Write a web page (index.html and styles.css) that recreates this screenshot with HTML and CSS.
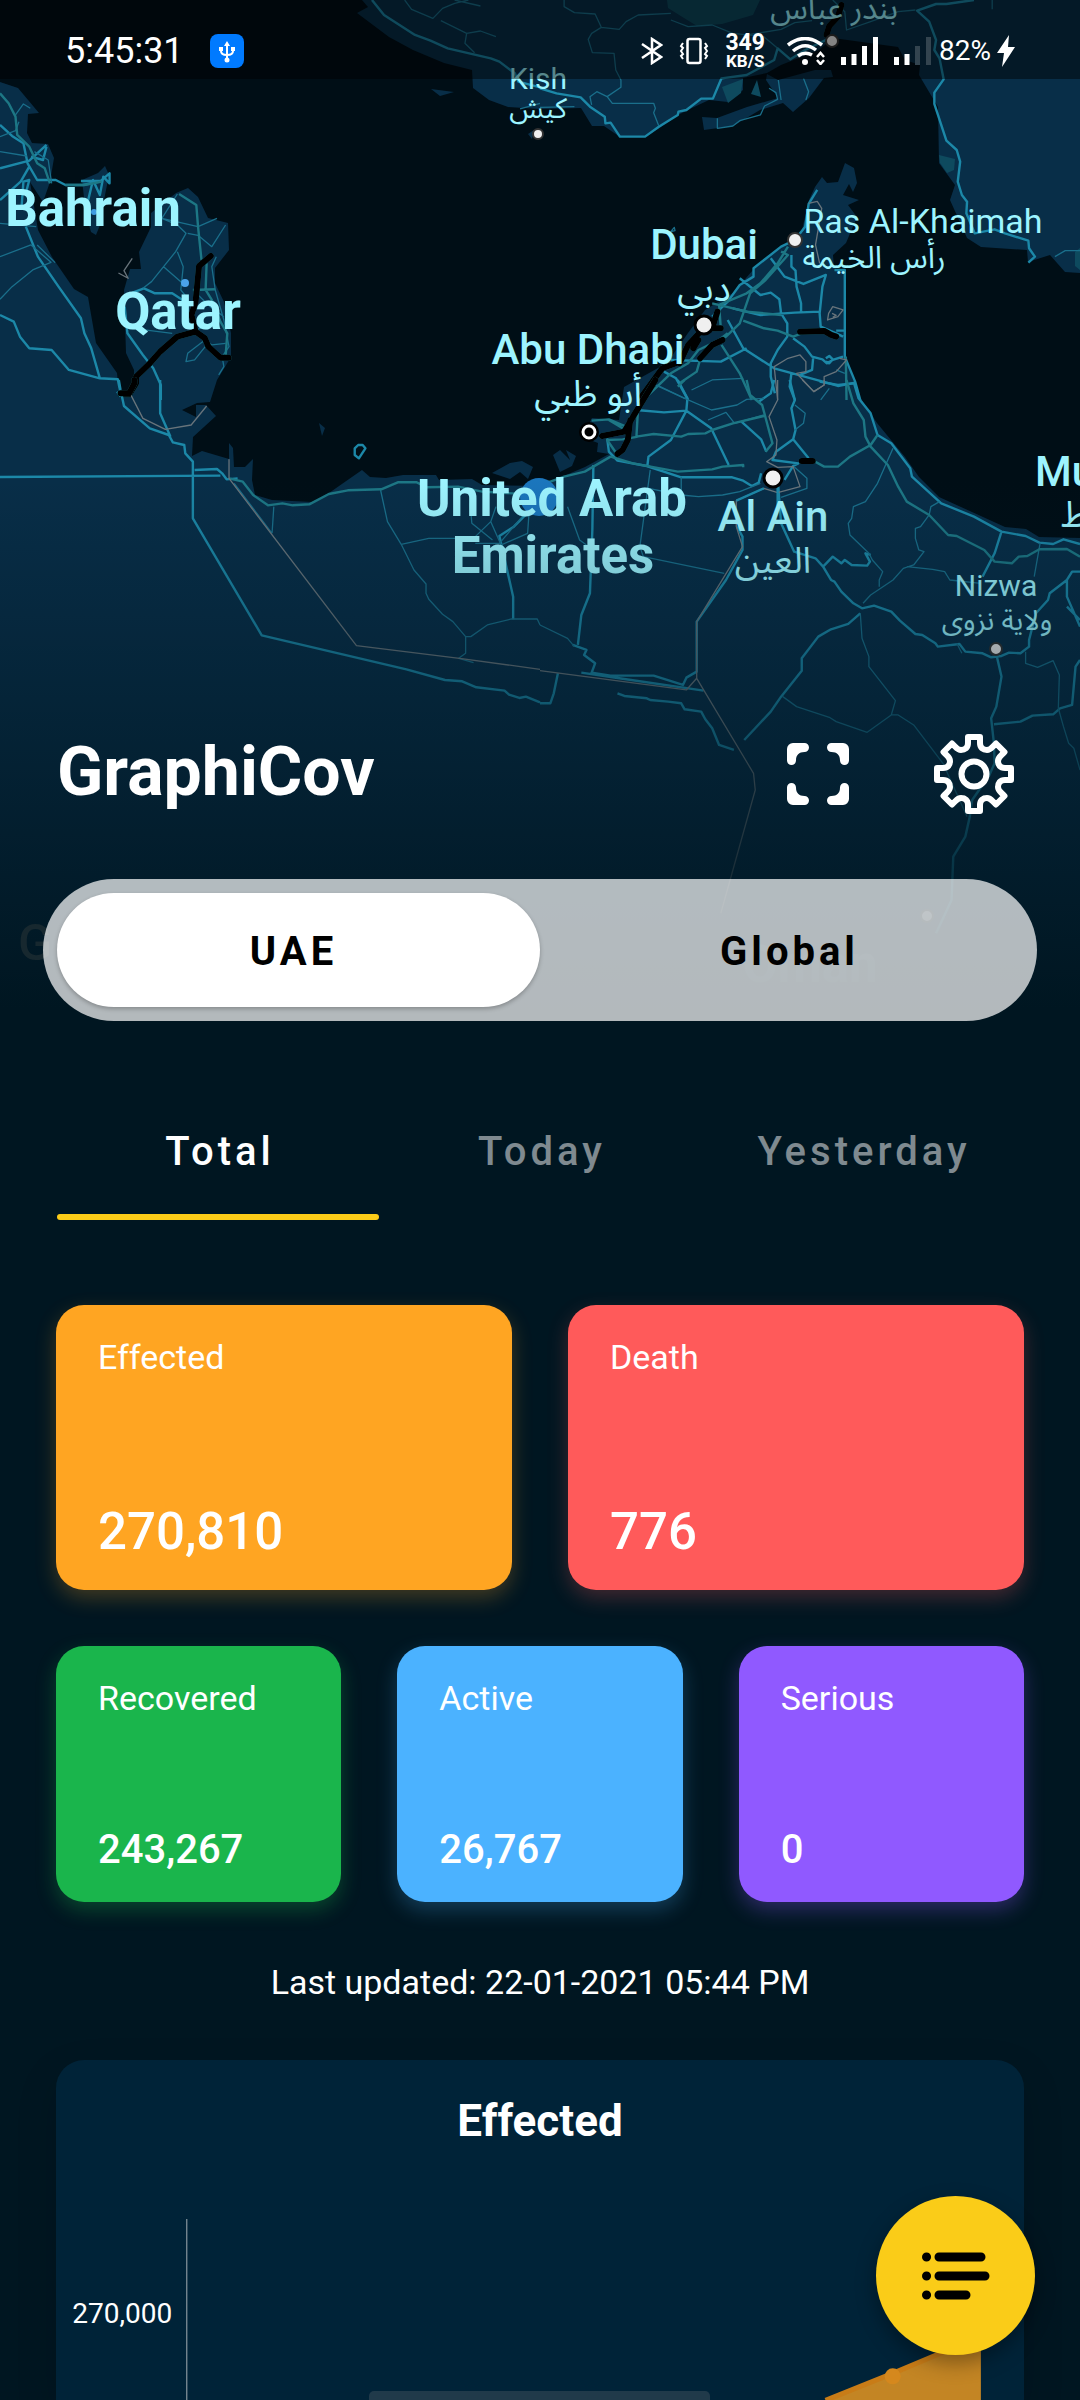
FILE: index.html
```html
<!DOCTYPE html>
<html lang="en">
<head>
<meta charset="utf-8">
<meta name="viewport" content="width=device-width, initial-scale=1">
<title>GraphiCov</title>
<link rel="stylesheet" href="styles.css">
</head>
<body>
<div class="app">
  <svg class="map" viewBox="0 0 1080 1010" preserveAspectRatio="xMidYMin slice" role="img" aria-label="Map of the Gulf region">
    <defs>
      <linearGradient id="fade" x1="0" y1="0" x2="0" y2="1">
        <stop offset="0" stop-color="#001621" stop-opacity="0"/>
        <stop offset="1" stop-color="#001621"/>
      </linearGradient>
    </defs>
    <rect width="1080" height="1010" fill="#000e16"/>

    <!-- land -->
    <g class="land">
      <path d="M0 82 18 88 39 113 28 114 27 133 32 143 48 144 54 158 50 182 43 202 30 182 38 230 52 257 74 289 88 297 96 343 117 373 119 393 134 390 134 370 126 353 124 290 130 269 141 269 139 252 151 227 151 213 176 193 188 188 198 197 208 218 228 223 229 250 215 268 215 283 224 302 231 333 231 357 217 380 210 402 197 403 182 410 196 417 196 405 206 405 216 416 193 437 192 456 202 451 229 459 229 443 233 448 234 467 245 467 253 459 252 480 255 495 272 500 312 502 329 493 362 470 370 477 386 478 403 475 436 475 439 480 472 479 482 485 540 486 585 467 609 454 597 452 598 443 582 437 592 418 619 420 624 387 667 363 688 333 705 310 733 293 753 270 802 230 809 200 815 187 822 177 827 183 838 182 845 163 854 168 857 183 853 192 849 184 843 195 859 200 848 205 857 217 846 243 833 255 834 268 845 272 845 357 860 397 877 423 905 457 919 477 939 497 1005 527 1026 529 1039 537 1080 538V1010H0Z"/>
      <path d="M362 0 368 7 357 13 389 37 413 50 444 63 472 70 473 88 489 100 508 107 540 109 581 108 592 126 604 126 620 137 647 136 661 127 678 115 692 108 709 100 728 102 743 90 743 78 767 73 781 65 819 50 833 38 898 47 905 60 920 65 919 75 938 107 939 163 955 185 950 200 967 238 981 247 1027 250 1028 262 1050 255 1065 272 1080 273V0Z"/>
      <path d="M702 117 717 118 747 107 778 98 766 80 767 74 778 80 815 70 831 70 833 77 824 78 809 98 793 112 783 103 760 110 733 126 704 130Z"/>
      <path d="M82 180 98 173 105 166 109 175 104 200 100 225 96 235 91 232 86 215Z"/>
      <path d="M431 89 454 92 440 96ZM492 473 510 463 522 461 533 467 528 479 520 472 510 479ZM319 423 325 428 322 436ZM553 455 560 450 570 460 566 450 576 456 572 466 560 472ZM528 134 534 130 532 139Z"/>
    </g>
    <g fill="#0e4a5e">
      <path d="M722 87 743 79 741 93 728 103ZM757 80 761 97 751 94ZM939 155 955 159 954 170 947 173 940 163ZM667 0H760L753 15 722 24 697 26 684 18 668 8Z"/>
      <path d="M1075 252 1080 248V270L1075 266Z"/>
    </g>

    <!-- west: Saudi Arabia, Bahrain, Qatar -->
    <g class="roads" transform="scale(.3444 .3333)">
      <path class="major" d="M0 375 35 408 68 430 80 490 108 540H162L190 555H240L290 545 318 520V550L300 530 290 585 270 540 255 605M235 543H300M0 505 85 482 135 435M90 470 125 480 135 440M85 500 60 545 0 600M62 630 68 545 85 540 75 580M75 680 110 770 170 860 235 955 245 1000 265 1045 290 1135 200 1110 150 1050 85 1045 58 1010 40 965 0 945M290 1135 342 1138 350 1180M362 920 370 1000 415 1065 445 1105 467 1155V1200M385 878 418 865 450 880H500L530 900M1080 0 1115 45 1205 105 1250 122 1300 145 1425 175 1450 185 1495 220 1505 245 1568 262"/>
      <path class="minor" d="M0 455 78 468M0 410 45 392 55 365M45 345 68 312 88 325M100 455 140 480 150 550M0 770 90 735 148 787 95 810 35 860 0 898M0 670 105 680M108 735 160 788M515 582 470 655 515 675 540 700 510 755 475 800 440 845 415 865M515 755 532 800 525 870 545 895M475 800 530 850M470 655 575 680 630 655M545 700 575 706 615 740 655 675M628 770 615 800 625 870 650 960 665 1040 645 1070 650 1100 635 1125M575 800 570 880 610 920 650 950M570 990 640 960M575 1000 615 1035 655 1030M595 1020 545 1060 540 1085 565 1080 600 1035M500 1000 420 990M1175 0 1195 28 1257 55 1285 25 1320 10 1360 0M1320 0 1370 12 1395 18M1280 62 1355 100 1350 130 1378 158M1355 100 1395 93 1440 110M1510 327 1568 310"/>
      <path class="motorway" d="M0 280 25 310 45 350 50 405 85 440 108 490 130 505 145 550M190 555H245L295 545M520 582 570 615 575 680 585 780M600 790 597 870 615 900 640 965 660 1000 655 1070M560 870 625 868M575 800 570 880"/>
      <path class="border" d="M384 775 360 812 372 835 344 819"/>
      <g class="closed"><path d="M612 768 578 798 568 905 556 945 568 995 515 1010 465 1055 435 1090 395 1130V1150L375 1183H350M568 995 595 1015 605 1040 640 1073H664"/></g>
    </g>

    <!-- north-east: Iran and the Emirates coast -->
    <g class="roads" transform="translate(540 0) scale(.3444 .3333)">
      <path class="major" d="M0 265 48 280 118 292 145 320 188 350 190 370 205 368 232 410H305L345 380 400 345 402 335 425 330 468 296H502L527 235 600 225 680 180 690 145 727 178 770 150 850 110M1260 0 1180 12 1150 12 1095 32 1130 65 1150 120 1145 150 1160 175 1172 238 1145 278V312L1180 422 1210 450 1220 485 1213 545 1225 585 1240 605 1238 640 1262 700 1320 688 1350 700 1418 722 1420 745 1437 770 1418 788"/>
      <path class="major" d="M805 570 780 612 770 680 740 720 700 740 620 805V830L580 855 545 905 500 950M670 775 710 830 765 852 830 825 820 860 812 940 815 980 860 1000 880 1010M730 765V800L742 812 745 860 758 910V935M580 835 640 885 670 878 695 898 700 940 718 970V1010L690 1050 670 1090V1130L682 1180M560 925 640 945 740 938 812 935M855 810H885V1070L915 1145 930 1200M545 960 590 1045 680 1105 840 1150 865 1158 915 1148M360 1115 395 1135 430 1200M380 1080 525 1085 600 1045M735 1015 768 1040 790 1070 820 1078 833 1090 850 1080 880 1070M860 992H882M730 1120 725 1160 740 1200M793 1075 790 1110 755 1125M830 1075 840 1068 850 1078 840 1090 830 1085"/>
      <path class="minor" d="M70 0V20L100 38 160 42 178 82 150 100 140 118 152 158 215 160 220 210 235 240V262L195 290 165 275 145 290 150 315M178 82 230 88 250 65 285 45 380 40M195 290 210 310H330L335 325 330 338 345 378M380 60 430 80 500 75 560 100 650 110 690 145M600 105 700 88 740 68 790 62M850 0 885 35 890 90 960 65 1040 35 1090 30M1313 0V28M1495 770 1525 752H1568M0 322 100 320M515 355V385L560 378 580 362 640 345 652 318 690 298 685 278 665 265M692 240 700 300M765 235 780 275 772 300M440 1170 500 1140 590 1135M385 688 380 695 392 692 390 682ZM860 1110 885 1120M840 1165 815 1200M340 1155 420 1195"/>
      <path class="motorway" d="M720 740 690 790 640 850 600 880 520 915 525 985M700 755 720 765 655 840 610 880 580 970 540 1010 460 1050 430 1090 380 1120 300 1200M500 910 600 935 700 945M590 962 650 985 690 992 735 1010 760 1000M527 1035 580 1120 615 1200M545 1000 470 1060 455 1115 405 1150M888 1070 890 1200"/>
      <path class="border" d="M780 610 805 604 818 625 800 735 812 790M838 940 850 920 880 930 865 950 835 960ZM848 940 860 946 850 952M690 1200 680 1100 720 1075 755 1065 772 1085V1115L745 1120 795 1175 825 1155V1130L860 1115 890 1080 870 1075"/>
      <g class="closed"><path d="M875 15 865 50 840 78 832 105M515 935 500 985H525M475 985 430 1035 405 1090M460 1020 445 1045M530 1020 500 1035 465 1075M395 1090 355 1105 295 1190M755 995 825 993 845 1005 860 1010"/></g>
    </g>

    <!-- south-west desert -->
    <g class="roads" transform="translate(0 380) scale(.3444 .3333)">
      <path class="major" d="M345 0 350 30 360 78 435 145 490 165 502 187 535 195 538 220 560 245V415L760 766 1180 868 1292 900 1342 904 1383 922 1465 932 1478 944 1508 954 1527 950 1568 967M0 291 640 287M465 0V100L495 170M565 270 630 267 645 280 658 298 690 295M1530 400 1492 440 1450 468 1490 650V718M340 35 350 50"/>
      <path class="minor" d="M680 310 790 460M795 380 790 460M1105 330 1125 425 1165 493 1202 570 1237 612V640L1245 658 1285 703 1315 725 1352 770H1367L1415 735 1485 717H1560L1568 735M1352 770V820L1332 835 1375 848M1165 493 1245 475H1330M1365 370 1370 430 1430 480M1440 380 1425 425 1380 470M1425 425 1455 495 1532 460 1538 370M1568 348 1450 490H1380"/>
      <path class="motorway" d="M665 295 705 305 735 345 778 376 820 370 850 376 898 373 955 342 1010 331 1107 328 1155 307H1210L1240 322 1330 320 1400 335 1568 345"/>
      <path class="border" d="M375 35 415 115 480 148 555 135 600 78M665 238V295L1035 797 1340 836 1568 868"/>
      <path class="major" d="M1030 205 1040 195H1053L1061 205 1042 235 1030 225Z"/>
      <g class="closed"><path d="M390 0V10L375 40H350"/></g>
    </g>

    <!-- south-east: Al Ain and Oman -->
    <g class="roads" transform="translate(540 380) scale(.3444 .3333)">
      <path class="major" d="M280 90 360 97 425 92 428 55 400 0M425 92 497 145 548 255M425 92 380 180 315 230 312 255M195 175 200 215 225 242 310 258 410 292H558L590 302 615 318 635 308 642 280M680 0 670 40 635 65M585 125 642 178 657 215M725 0 740 60 730 85 742 150 735 178 685 215 675 240 750 250 735 258 710 300M735 178 780 235M812 5 865 15 912 10 925 55 960 100 980 165 1020 190 1075 265 1080 290 1165 370 1260 410 1340 455 1410 468 1450 488 1490 492 1520 478 1568 492M692 320 700 430 738 515 800 535 822 560 845 600 855 605 875 635 910 670 935 685 970 677 1020 695 1045 722 1090 762 1110 765 1148 790 1155 800 1218 792 1235 815 1285 820 1310 832 1340 828 1362 818 1395 820 1420 800V780L1440 700 1475 660 1480 640 1530 600V650L1568 740M822 560 850 530 875 550 885 540 905 555 950 557 958 545 945 520 960 525M1340 455 1320 520 1285 590M155 255 152 450 145 640 120 705 110 795M572 440 588 470V510L540 600 455 725V875L425 893 415 915 330 887H205L150 878 160 850 128 825 135 810 95 795M0 970 30 970 40 940 52 880M225 940 245 948 310 955 320 960 372 965 410 970 420 988 468 995 480 1018 500 1045 520 1095 563 1110M930 700 895 732 845 748 808 770 760 835V872L700 950 670 995 593 1080M1327 832 1340 890 1325 980 1310 1015 1318 1090 1320 1150 1305 1185 1255 1260 1248 1310 1235 1370 1200 1430 1195 1560 1150 1660M1318 1033 1395 1025 1430 1007 1490 1003 1510 985 1545 975 1555 860 1568 840M1568 575H1545L1530 600M1530 680 1568 720M120 878 230 895 475 932"/>
      <path class="minor" d="M325 10 420 55 498 90 572 75 600 58 650 55M488 120 540 97 565 130 650 105M320 270 290 500 300 530 535 580M80 380 115 480 135 495M315 325 410 345 460 350 530 345 580 335 640 310M410 290V340M738 260 775 295V325L700 352M740 75 770 100 765 130 740 150M1025 205 980 310 945 365 910 380 905 415 895 430 900 465 955 520 965 540 995 575 985 600V620M1160 365 1135 380 1130 405 1105 440 1090 445V475L1100 510 1115 515 1085 555 1055 565 1025 600 960 645 938 670M1065 560 1140 568 1175 575 1190 600 1280 610M1452 490 1435 590M930 700 935 775 955 830V860L1032 962 1020 1005 950 1057 860 1025 840 1012 745 980 705 950M1020 1005H1040L1085 1035 1170 1150 1240 1310M1410 815V850L1445 862 1490 842 1508 885 1505 985 1520 1040 1535 1090 1550 1105 1568 1170M0 735 80 775 100 800M1210 790 1225 820"/>
      <path class="motorway" d="M285 80 280 170 330 162 410 170 430 162 480 160 500 150 560 130 650 108M600 0 610 45 645 75 675 190 655 215M0 305 30 305 70 290 130 275 205 230 270 250 400 275 500 268 530 260 590 255 590 262M285 170 240 178 195 180 225 225M150 122 200 118 250 140M200 120 240 145M890 0 910 70 940 120 945 170 960 200 1010 255 1040 320 1065 365 1130 405 1185 465 1210 468 1290 510 1320 545 1370 550 1390 530 1415 528 1450 508 1530 507 1568 530M980 165 960 195 900 230 865 260H825L790 240M400 20 420 0"/>
      <path class="border" d="M690 0V60L665 110 688 180 685 225 658 245 690 262 735 260 755 320 690 338 650 325 570 362V440L588 500 455 725V895L425 930 0 872M455 895 620 1180 625 1230 525 1600M762 0 795 35 825 15V0"/>
      <path class="major" d="M650 325 570 362M690 320V380"/>
      <g class="closed"><path d="M335 0 270 110 245 155 180 168M262 120 255 180 240 210 225 222M760 243H792"/></g>
    </g>

    <circle cx="539" cy="497" r="19" fill="#1b76bd"/>
    <circle cx="94" cy="212" r="3" fill="#3f9be0"/>
    <circle cx="185" cy="283" r="4" fill="#4ba3ea"/>

    <g class="pins">
      <circle cx="538" cy="134" r="5"/>
      <circle cx="832" cy="41" r="6"/>
      <circle cx="795" cy="240" r="7"/>
      <circle class="pin-big" cx="704" cy="325" r="9"/>
      <circle class="pin-big" cx="773" cy="478" r="9"/>
      <circle cx="996" cy="649" r="6"/>
      <circle cx="927" cy="916" r="6"/>
    </g>
    <circle cx="589" cy="432" r="10"/>
    <circle cx="589" cy="432" r="6" fill="#000" stroke="#fff" stroke-width="3"/>

    <g class="labels">
      <g class="country">
        <text x="93" y="226">Bahrain</text>
        <text x="178" y="329">Qatar</text>
        <text x="552" y="516">United Arab</text>
        <text x="553" y="573">Emirates</text>
        <text x="810" y="982" opacity=".4">Oman</text>
      </g>
      <g class="city">
        <text x="704" y="259">Dubai</text>
        <text x="704" y="301" class="arabic">دبي</text>
        <text x="588" y="364">Abu Dhabi</text>
        <text x="588" y="406" class="arabic">أبو ظبي</text>
        <text x="773" y="531">Al Ain</text>
        <text x="773" y="573" class="arabic">العين</text>
        <text x="1035" y="486" class="cut">Muscat</text>
        <text x="1061" y="527" class="arabic cut">مسقط</text>
      </g>
      <g class="town">
        <text x="923" y="233">Ras Al-Khaimah</text>
        <text x="874" y="268" class="arabic">رأس الخيمة</text>
        <text x="834" y="19" class="arabic">بندر عباس</text>
      </g>
      <g class="village">
        <text x="538" y="89">Kish</text>
        <text x="538" y="118" class="arabic">كيش</text>
        <text x="996" y="596">Nizwa</text>
        <text x="997" y="630" class="arabic">ولاية نزوى</text>
      </g>
    </g>
    <rect y="480" width="1080" height="530" fill="url(#fade)"/>
    <text class="watermark" x="18" y="960">G</text>
  </svg>

  <div class="status">
    <span class="clock">5:45:31</span>
    <svg class="usb" width="34" height="34" viewBox="0 0 34 34" aria-hidden="true">
      <rect width="34" height="34" rx="8" fill="#007aff"/>
      <g fill="none" stroke="#fff" stroke-width="2"><path d="M17 10V26M11 15V17Q11 21 17 21T23 17V15"/></g>
      <path d="M17 7 20 12H14ZM9 13H13V17H9ZM21 13H25V17H21Z" fill="#fff"/><circle cx="17" cy="26" r="2.5" fill="#fff"/>
    </svg>
    <div class="signals">
      <svg width="22" height="28" viewBox="0 0 22 28" aria-hidden="true"><path d="M1 7 20 20 11 26V2L20 8 1 21" fill="none" stroke="#fff" stroke-width="2.5"/></svg>
      <svg width="30" height="28" viewBox="0 0 30 28" aria-hidden="true"><rect x="8.500" y="2" width="13" height="24" rx="2" fill="none" stroke="#fff" stroke-width="2.500"/><path d="M4 6 2 9 4 11 2 14 4 17 2 19 4 22M26 6 28 9 26 11 28 14 26 17 28 19 26 22" fill="none" stroke="#fff" stroke-width="2"/></svg>
      <span class="speed"><b>349</b><small>KB/S</small></span>
      <svg class="wifi" width="38" height="28" viewBox="0 0 38 28" aria-hidden="true"><g fill="none" stroke="#fff" stroke-width="3.500"><path d="M1 8Q18-5 35 8M6 14Q18 4 29 13M11 19Q18 14 25 18"/></g><circle cx="18" cy="25" r="3" fill="#fff"/><path d="M30 20 33.500 16 37 20M30 23 33.500 27 37 23" fill="none" stroke="#fff" stroke-width="2.500"/></svg>
      <svg width="37" height="28" viewBox="0 0 37 28" aria-hidden="true"><path d="M0 20h5v8H0zM10.500 17h5v11h-5zM21 9h5v19h-5zM32 0h5v28h-5z" fill="#fff"/></svg>
      <svg width="37" height="28" viewBox="0 0 37 28" aria-hidden="true"><path d="M0 20h5v8H0zM10.500 17h5v11h-5z" fill="#fff"/><path d="M21 9h5v19h-5zM32 0h5v28h-5z" fill="#33444f"/></svg>
      <span class="battery">82%</span>
      <svg width="18" height="32" viewBox="0 0 18 32" aria-hidden="true"><path d="M12 0 0 18H7L5 32 18 12H11Z" fill="#fff"/></svg>
    </div>
  </div>

  <header class="header">
    <h1>GraphiCov</h1>
    <button class="icon-button" type="button" aria-label="Full screen">
      <svg width="62" height="62" viewBox="0 0 62 62" fill="#fff">
        <defs><path id="corner" d="M6 0H17.500a4.500 4.500 0 0 1 0 9C12 9 9 12 9 17.500a4.500 4.500 0 0 1-9 0V6A6 6 0 0 1 6 0Z"/></defs>
        <use href="#corner"/><use href="#corner" transform="translate(62 0) scale(-1 1)"/><use href="#corner" transform="translate(0 62) scale(1 -1)"/><use href="#corner" transform="translate(62 62) scale(-1 -1)"/>
      </svg>
    </button>
    <button class="icon-button" type="button" aria-label="Settings">
      <svg width="80" height="80" viewBox="0 0 80 80" fill="none" stroke="#fff" stroke-width="6" stroke-linejoin="round">
        <path d="M34 3H46V9C46 14 49 16 53 16 57 16 58 13 62 9.500L70.500 18C67 22 64 23 64 27 64 31 66 34 71 34H77V46H71C66 46 64 49 64 53 64 57 67 58 70.500 62L62 70.500C58 67 57 64 53 64 49 64 46 66 46 71V77H34V71C34 66 31 64 27 64 23 64 22 67 18 70.500L9.500 62C13 58 16 57 16 53 16 49 14 46 9 46H3V34H9C14 34 16 31 16 27 16 23 13 22 9.500 18L18 9.500C22 13 23 16 27 16 31 16 34 14 34 9Z"/>
        <circle cx="40" cy="40" r="12.500"/>
      </svg>
    </button>
  </header>

  <div class="segment">
    <button class="segment-item selected" type="button">UAE</button>
    <button class="segment-item" type="button">Global</button>
  </div>

  <nav class="tabs">
    <button class="tab active" type="button">Total</button>
    <button class="tab" type="button">Today</button>
    <button class="tab" type="button">Yesterday</button>
  </nav>

  <main class="content">
    <div class="cards large">
      <section class="card effected"><h2>Effected</h2><p>270,810</p></section>
      <section class="card death"><h2>Death</h2><p>776</p></section>
    </div>
    <div class="cards small">
      <section class="card recovered"><h2>Recovered</h2><p>243,267</p></section>
      <section class="card active-cases"><h2>Active</h2><p>26,767</p></section>
      <section class="card serious"><h2>Serious</h2><p>0</p></section>
    </div>
    <p class="updated">Last updated: 22-01-2021 05:44 PM</p>
    <section class="chart">
      <h2>Effected</h2>
      <svg class="plot" viewBox="0 0 966 181" role="img" aria-label="Effected over time">
        <path d="M768 181 923 117V181Z" fill="#c38524"/>
        <path d="M768 181 835 154 923 117" fill="none" stroke="#c87c17" stroke-width="5"/>
        <circle cx="835" cy="157" r="8" fill="#d5881d"/>
        <path d="M130.500 0V181" stroke="#a3adb3"/>
        <text x="116" y="104">270,000</text>
      </svg>
    </section>
  </main>

  <button class="fab" type="button" aria-label="Menu">
    <svg width="68" height="48" viewBox="0 0 68 48" stroke="#000" stroke-width="9" stroke-linecap="round">
      <path d="M4.500 5H4.600M17 5H59M4.500 24H4.600M17 24H63M4.500 43H4.600M17 43H44"/>
    </svg>
  </button>
  <div class="home-bar"></div>
</div>
</body>
</html>
```

FILE: styles.css
```css
* { box-sizing: border-box; }
body {
  margin: 0;
  background: #001621;
  color: #fff;
  font-family: Roboto, "Noto Sans", sans-serif;
}
h1, h2, p { margin: 0; }
button {
  border: 0;
  padding: 0;
  background: none;
  color: inherit;
  font: inherit;
}
svg { display: block; flex: none; }

.app {
  position: relative;
  display: flex;
  flex-direction: column;
  min-height: 100vh;
}

/* Map behind the header */
.map {
  position: absolute;
  top: 0;
  left: 0;
  width: 100%;
  height: 1010px;
  z-index: -1;
}
.land { fill: #082e48; }
.roads path { fill: none; vector-effect: non-scaling-stroke; stroke-linejoin: round; }
.roads .major { stroke: #1c88a8; stroke-width: 2.4; }
.roads .minor { stroke: #1a6f8b; stroke-width: 1.3; }
.roads .motorway { stroke: #1d7785; stroke-width: 2.4; }
.roads .border { stroke: #68747b; stroke-width: 1.3; }
.closed path { stroke: #000; stroke-width: 6; stroke-linecap: round; }
.closed { filter: drop-shadow(0 0 1px #1d7785); }
.pins circle { fill: #f0f0f0; stroke: #333; stroke-width: 2; }
.pins .pin-big { stroke: #000; stroke-width: 3; }
.labels { fill: #9df4ff; text-anchor: middle; }
.country { font-size: 51px; font-weight: 700; }
.city { font-size: 42px; font-weight: 500; }
.town { font-size: 34px; }
.village { font-size: 30px; }
.arabic { font-family: "Noto Sans Arabic", "Noto Sans", "DejaVu Sans", sans-serif; font-weight: 400; }
.city .arabic { font-size: 36px; }
.town .arabic { font-size: 31px; }
.village .arabic { font-size: 28px; }
.cut { text-anchor: start; }
.arabic.cut { direction: ltr; }
.watermark { font-size: 50px; font-weight: 500; fill: #17282f; }

/* System status bar */
.status {
  display: flex;
  align-items: center;
  height: 79px;
  padding: 22px 65px 0;
  background: rgba(0, 0, 0, 0.45);
}
.clock { font-size: 36px; line-height: 40px; margin-right: 26px; }
.signals { display: flex; align-items: center; gap: 16px; margin-left: auto; }
.speed { display: flex; flex-direction: column; align-items: center; }
.speed b { font-size: 23px; line-height: 20px; font-weight: 700; }
.speed small { font-size: 17px; line-height: 16px; font-weight: 700; }
.wifi { margin-left: 6px; }
.battery { font-size: 28px; line-height: 36px; margin: 0 -10px 0 -8px; }

/* Title row */
.header {
  display: flex;
  align-items: center;
  height: 80px;
  margin-top: 655px;
  padding: 0 66px 0 57px;
}
.header h1 {
  margin-right: auto;
  padding-bottom: 4px;
  font-size: 68px;
  line-height: 74px;
  font-weight: 700;
}
.icon-button + .icon-button { margin-left: 85px; }

/* UAE / Global switch */
.segment {
  display: grid;
  grid-template-columns: 1fr 1fr;
  height: 142px;
  margin: 65px 43px 0;
  border-radius: 71px;
  background: rgba(255, 255, 255, 0.7);
  color: #000;
}
.segment-item {
  padding: 2px 0 0 2px;
  border-radius: 71px;
  font-size: 40px;
  font-weight: 700;
  letter-spacing: 4px;
}
.segment-item.selected {
  margin: 14px 0 14px 14px;
  padding-right: 12px;
  background: #fff;
  box-shadow: 0 2px 4px rgba(0, 0, 0, 0.25);
}

.tabs {
  display: grid;
  grid-template-columns: repeat(3, 1fr);
  margin: 107px 57px 0;
}
.tab {
  position: relative;
  padding: 0 0 44px 4px;
  font-size: 40px;
  line-height: 48px;
  font-weight: 500;
  letter-spacing: 4px;
  color: rgba(255, 255, 255, 0.5);
}
.tab.active { color: #fff; }
.tab.active::after {
  content: "";
  position: absolute;
  left: 0;
  right: 0;
  bottom: 0;
  height: 6px;
  border-radius: 3px;
  background: #fbcc18;
}

/* Figures */
.content {
  display: flex;
  flex: 1;
  flex-direction: column;
  padding: 85px 56px 0;
}
.cards { display: grid; gap: 56px; }
.large { grid-template-columns: repeat(2, 1fr); margin-bottom: 56px; }
.small { grid-template-columns: repeat(3, 1fr); }
.card {
  display: flex;
  flex-direction: column;
  justify-content: space-between;
  min-height: 256px;
  padding: 32px 42px 28px;
  border-radius: 28px;
}
.large .card { min-height: 285px; }
.card h2 { font-size: 34px; line-height: 40px; font-weight: 400; }
.card p { font-size: 40px; line-height: 48px; font-weight: 500; }
.large .card p { font-size: 51px; line-height: 60px; }
.effected { background: #ffa522; box-shadow: 0 8px 20px rgba(255, 165, 34, 0.25); }
.death { background: #ff5a5a; box-shadow: 0 8px 20px rgba(255, 90, 90, 0.25); }
.recovered { background: #1ab54c; box-shadow: 0 8px 20px rgba(26, 181, 76, 0.3); }
.active-cases { background: #4bb2ff; box-shadow: 0 8px 20px rgba(75, 178, 255, 0.25); }
.serious { background: #9059ff; box-shadow: 0 8px 20px rgba(144, 89, 255, 0.3); }
.updated {
  margin: 60px 0 58px;
  font-size: 34px;
  line-height: 40px;
  text-align: center;
}

.chart {
  flex: 1;
  padding-top: 35px;
  border-radius: 28px 28px 0 0;
  background: #002338;
  box-shadow: 0 16px 40px rgba(0, 0, 0, 0.15);
}
.chart h2 {
  margin-bottom: 72px;
  font-size: 44px;
  line-height: 52px;
  font-weight: 700;
  text-align: center;
}
.plot { width: 100%; }
.plot text { font-size: 28px; fill: #fff; text-anchor: end; }

.fab {
  position: fixed;
  right: 45px;
  bottom: 45px;
  display: grid;
  place-items: center;
  width: 159px;
  height: 159px;
  border-radius: 50%;
  background: #facc18;
  box-shadow: 0 8px 20px rgba(0, 0, 0, 0.35);
}
.home-bar {
  position: fixed;
  bottom: 0;
  left: 50%;
  width: 341px;
  height: 9px;
  margin-left: -171px;
  border-radius: 5px 5px 0 0;
  background: #203a4a;
}
```
